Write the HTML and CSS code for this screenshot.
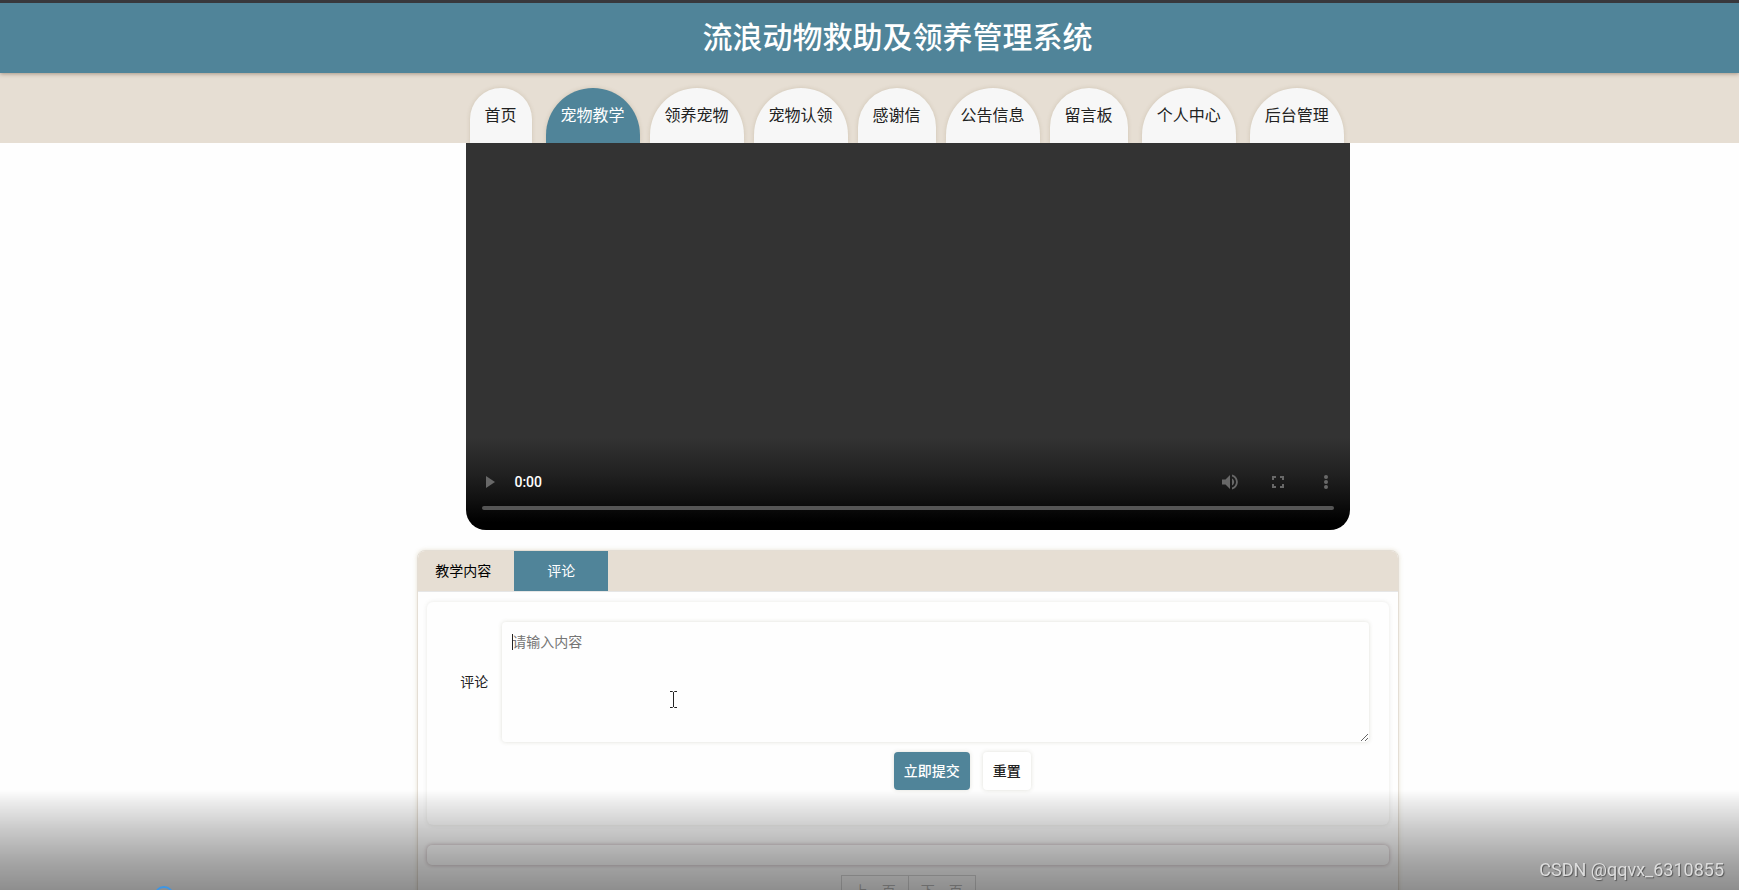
FILE: index.html
```html
<!DOCTYPE html>
<html lang="zh-CN">
<head>
<meta charset="utf-8">
<title>流浪动物救助及领养管理系统</title>
<link rel="stylesheet" href="styles.css">
</head>
<body>
<header class="site-header">
  <h1 class="site-title">流浪动物救助及领养管理系统</h1>
</header>
<nav class="site-nav">
  <ul class="nav-list">
    <li><a class="nav-link" href="#">首页</a></li>
    <li class="spaced"><a class="nav-link active" href="#">宠物教学</a></li>
    <li><a class="nav-link" href="#">领养宠物</a></li>
    <li><a class="nav-link" href="#">宠物认领</a></li>
    <li><a class="nav-link" href="#">感谢信</a></li>
    <li><a class="nav-link" href="#">公告信息</a></li>
    <li><a class="nav-link" href="#">留言板</a></li>
    <li class="spaced"><a class="nav-link" href="#">个人中心</a></li>
    <li class="spaced"><a class="nav-link" href="#">后台管理</a></li>
  </ul>
</nav>
<main class="content">
  <section class="player">
    <div class="controls">
      <button class="control" type="button" aria-label="播放"><svg viewBox="0 0 24 24"><path d="M8 6v12l9-6z"/></svg></button>
      <span class="time">0:00</span>
      <button class="control" type="button" aria-label="音量"><svg viewBox="0 0 24 24"><path d="M4 9.500v5h3.500l4.500 4.500V5L7.500 9.500zM14 8.500v7c1.300-.6 2.200-2 2.200-3.500S15.300 9.100 14 8.500zM14 4.500v2c2.400.7 4 2.900 4 5.500s-1.600 4.800-4 5.500v2c3.400-.8 5.800-3.900 5.800-7.500S17.400 5.300 14 4.500z"/></svg></button>
      <button class="control" type="button" aria-label="全屏"><svg viewBox="0 0 24 24"><path d="M6 6h4v2H8v2H6zM14 6h4v4h-2V8h-2zM6 14h2v2h2v2H6zM16 14h2v4h-4v-2h2z"/></svg></button>
      <button class="control" type="button" aria-label="更多"><svg viewBox="0 0 24 24"><circle cx="12" cy="7" r="2"/><circle cx="12" cy="12" r="2"/><circle cx="12" cy="17" r="2"/></svg></button>
    </div>
    <div class="track"></div>
  </section>
  <section class="panel">
    <div class="tabs">
      <button class="tab" type="button">教学内容</button>
      <button class="tab current" type="button">评论</button>
    </div>
    <div class="panel-body">
      <form class="comment-form">
        <div class="field">
          <label class="field-label" for="comment">评论</label>
          <div class="field-input">
            <textarea class="comment-box" id="comment" placeholder="请输入内容"></textarea>
            <span class="caret"></span>
            <svg class="pointer" viewBox="0 0 9 17"><path d="M1 .5h2.500l1 1 1-1H8M4.500 1v15M1 16.500h2.500l1-1 1 1H8"/></svg>
          </div>
        </div>
        <div class="actions">
          <button class="btn primary" type="button">立即提交</button>
          <button class="btn" type="reset">重置</button>
        </div>
      </form>
      <div class="comment-list"></div>
      <div class="pager">
        <button class="page-btn" type="button">上一页</button>
        <button class="page-btn" type="button">下一页</button>
      </div>
    </div>
  </section>
</main>
<div class="shade"></div>
<div class="ring"></div>
<div class="watermark">CSDN @qqvx_6310855</div>
</body>
</html>
```
FILE: styles.css
```css
* { box-sizing: border-box; }

body {
  margin: 0;
  height: 100vh;
  overflow: hidden;
  background: #fefefe;
  color: #222;
  font: 14px/20px "Noto Sans CJK SC", sans-serif;
}

button, textarea { font: inherit; color: inherit; }

.site-header {
  position: relative;
  border-top: 3px solid #38383c;
  padding: 12px 0 18px 56px;
  background: #508499;
  box-shadow: 0 1px 4px rgba(90, 60, 40, .45);
  text-align: center;
}

.site-title {
  margin: 0;
  color: #fff;
  font-size: 30px;
  font-weight: 500;
  line-height: 40px;
}

.site-nav {
  padding: 15px 0 0 27%;
  background: #e6ded3;
}

.nav-list {
  display: flex;
  gap: 10px;
  margin: 0;
  padding: 0;
  list-style: none;
}

.spaced { margin-left: 4px; }

.nav-link {
  display: block;
  padding: 14px 15px 17px;
  border-radius: 50px 50px 0 0;
  background: #f7f7f7;
  box-shadow: 0 0 4px rgba(120, 100, 60, .2);
  color: #222;
  font-size: 16px;
  line-height: 24px;
  text-decoration: none;
  white-space: nowrap;
}

.nav-link.active { background: #508499; color: #fff; }

.content {
  display: grid;
  grid-template-columns: minmax(0, 1fr);
  gap: 20px;
  padding-left: 24%;
  padding-right: calc(20% - 8px);
}

.player {
  position: relative;
  display: flex;
  flex-direction: column;
  justify-content: flex-end;
  height: 387px;
  margin: 0 5%;
  padding: 0 16px 20px;
  border-radius: 0 0 20px 20px;
  background: linear-gradient(#333 0, #333 76%, #222 85%, #111 92%, #000 98%);
}

.controls {
  display: flex;
  align-items: center;
  gap: 24px;
  margin-bottom: 12px;
}

.control {
  width: 24px;
  height: 24px;
  padding: 0;
  border: 0;
  background: none;
}

.control:first-child { margin-left: -4px; }
.control:last-child { margin-right: -4px; }

.control svg { display: block; fill: #686868; }

.time {
  flex: 1;
  margin-left: -12px;
  color: #fff;
  font-family: Roboto, sans-serif;
  font-weight: 500;
}

.track {
  height: 4px;
  border-radius: 2px;
  background: #555;
}

.panel {
  border: 1px solid #e4ded5;
  border-radius: 8px 8px 0 0;
  background: #fefefe;
  box-shadow: 0 0 4px rgba(180, 160, 110, .3);
}

.tabs {
  display: flex;
  border-bottom: 1px solid #e6e6e6;
  border-radius: 7px 7px 0 0;
  background: #e6ded3;
}

.tab {
  padding: 9px 17px 11px;
  border: 0;
  background: none;
  color: #000;
}

.tab:first-child { padding-right: 23px; }

.tab.current {
  padding-right: 33px;
  padding-left: 33px;
  background: #508499;
  color: #fff;
}

.panel-body { padding: 10px 9px 0; }

.comment-form {
  padding: 20px 20px 35px;
  border-radius: 6px;
  box-shadow: 0 0 4px rgba(100, 100, 80, .15);
}

.field { display: flex; align-items: center; }

.field-label {
  width: 55px;
  padding: 0 0 2px 13px;
}

.field-input { position: relative; flex: 1; }

.comment-box {
  display: block;
  width: 100%;
  height: 120px;
  padding: 9px 10px;
  border: 0;
  border-radius: 4px;
  outline: 0;
  background: #fefefe;
  box-shadow: 0 0 4px rgba(100, 100, 70, .2);
  resize: vertical;
}

.comment-box::placeholder { color: #757575; }

.caret {
  position: absolute;
  top: 12px;
  left: 10px;
  width: 1px;
  height: 16px;
  background: #222;
}

.pointer {
  position: absolute;
  top: 69px;
  left: 167px;
  width: 9px;
  height: 17px;
  fill: none;
  stroke: #222;
}

.actions {
  display: flex;
  justify-content: center;
  gap: 13px;
  margin-top: 10px;
  padding-left: 108px;
}

.btn {
  padding: 8px 10px 10px;
  border: 0;
  border-radius: 4px;
  background: #fff;
  box-shadow: 0 0 4px rgba(100, 100, 70, .2);
  font-weight: 500;
}

.btn.primary { background: #508499; color: #fff; }

.comment-list {
  height: 20px;
  margin-top: 20px;
  border-radius: 5px;
  box-shadow: 0 0 4px rgba(90, 40, 50, .35);
}

.pager {
  display: flex;
  justify-content: center;
  margin-top: 10px;
}

.page-btn {
  padding: 4px 12px;
  border: 1px solid #d8d8d8;
  background: none;
  color: #bbb;
}

.page-btn + .page-btn { margin-left: -1px; }

.shade {
  position: fixed;
  right: 0;
  bottom: 0;
  left: 0;
  height: 100px;
  background: linear-gradient(rgba(0, 0, 0, 0), rgba(0, 0, 0, .07) 12%, rgba(0, 0, 0, .2) 38%, rgba(0, 0, 0, .35) 72%, rgba(0, 0, 0, .44));
  pointer-events: none;
}

.ring {
  position: fixed;
  bottom: -16px;
  left: 154px;
  width: 20px;
  height: 20px;
  border: 2px solid #3c96e6;
  border-radius: 50%;
}

.watermark {
  position: fixed;
  right: 15px;
  bottom: 10px;
  color: #ddd;
  font: 18px/20px Roboto, sans-serif;
  text-shadow: 1px 1px 1px #555;
}
```
